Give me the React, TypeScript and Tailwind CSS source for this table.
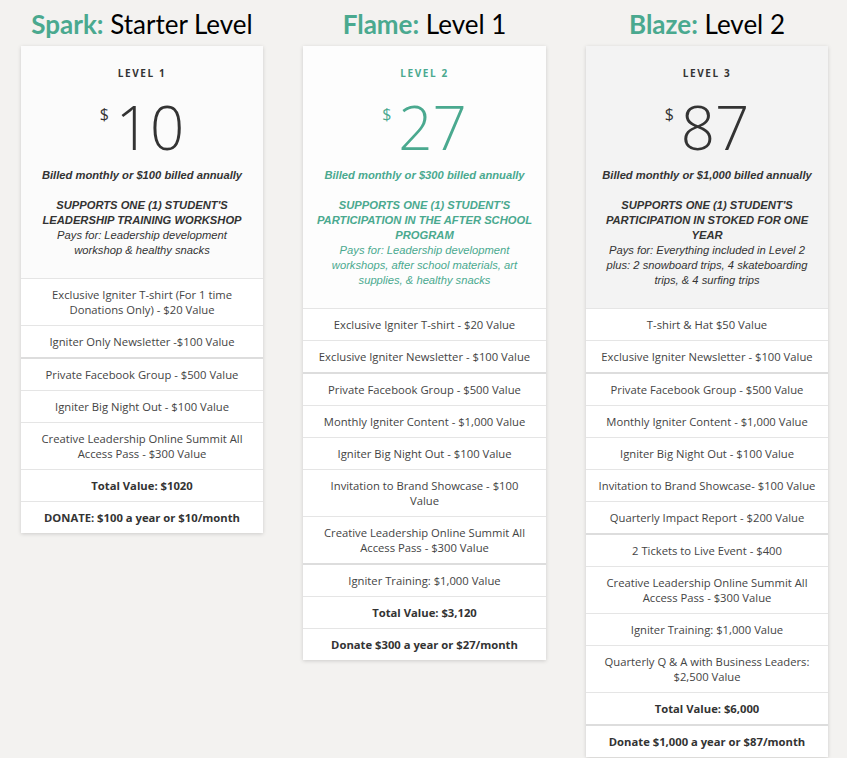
type Row = { text: string; bold?: boolean; thick?: boolean };

type Plan = {
  name: string;
  title: string;
  level: string;
  price: string;
  billed: string;
  supports: string;
  pays: string;
  teal: boolean;
  headerBg: string;
  rows: Row[];
};

const plans: Plan[] = [
  {
    name: 'Spark:',
    title: 'Starter Level',
    level: 'LEVEL 1',
    price: '10',
    billed: 'Billed monthly or $100 billed annually',
    supports: "SUPPORTS ONE (1) STUDENT'S LEADERSHIP TRAINING WORKSHOP",
    pays: 'Pays for: Leadership development workshop & healthy snacks',
    teal: false,
    headerBg: 'bg-[#fbfbfb]',
    rows: [
      { text: 'Exclusive Igniter T-shirt (For 1 time Donations Only) - $20 Value' },
      { text: 'Igniter Only Newsletter -$100 Value' },
      { text: 'Private Facebook Group - $500 Value', thick: true },
      { text: 'Igniter Big Night Out - $100 Value' },
      { text: 'Creative Leadership Online Summit All Access Pass - $300 Value' },
      { text: 'Total Value: $1020', bold: true },
      { text: 'DONATE: $100 a year or $10/month', bold: true },
    ],
  },
  {
    name: 'Flame:',
    title: 'Level 1',
    level: 'LEVEL 2',
    price: '27',
    billed: 'Billed monthly or $300 billed annually',
    supports: "SUPPORTS ONE (1) STUDENT'S PARTICIPATION IN THE AFTER SCHOOL PROGRAM",
    pays: 'Pays for: Leadership development workshops, after school materials, art supplies, & healthy snacks',
    teal: true,
    headerBg: 'bg-[#fdfdfd]',
    rows: [
      { text: 'Exclusive Igniter T-shirt - $20 Value' },
      { text: 'Exclusive Igniter Newsletter - $100 Value' },
      { text: 'Private Facebook Group - $500 Value', thick: true },
      { text: 'Monthly Igniter Content - $1,000 Value' },
      { text: 'Igniter Big Night Out - $100 Value' },
      { text: 'Invitation to Brand Showcase - $100\nValue' },
      { text: 'Creative Leadership Online Summit All Access Pass - $300 Value' },
      { text: 'Igniter Training: $1,000 Value', thick: true },
      { text: 'Total Value: $3,120', bold: true },
      { text: 'Donate $300 a year or $27/month', bold: true },
    ],
  },
  {
    name: 'Blaze:',
    title: 'Level 2',
    level: 'LEVEL 3',
    price: '87',
    billed: 'Billed monthly or $1,000 billed annually',
    supports: "SUPPORTS ONE (1) STUDENT'S PARTICIPATION IN STOKED FOR ONE YEAR",
    pays: 'Pays for: Everything included in Level 2 plus: 2 snowboard trips, 4 skateboarding trips, & 4 surfing trips',
    teal: false,
    headerBg: 'bg-[#f3f3f3]',
    rows: [
      { text: 'T-shirt & Hat $50 Value' },
      { text: 'Exclusive Igniter Newsletter - $100 Value' },
      { text: 'Private Facebook Group - $500 Value', thick: true },
      { text: 'Monthly Igniter Content - $1,000 Value' },
      { text: 'Igniter Big Night Out - $100 Value' },
      { text: 'Invitation to Brand Showcase- $100 Value' },
      { text: 'Quarterly Impact Report - $200 Value' },
      { text: '2 Tickets to Live Event - $400', thick: true },
      { text: 'Creative Leadership Online Summit All Access Pass - $300 Value' },
      { text: 'Igniter Training: $1,000 Value' },
      { text: 'Quarterly Q & A with Business Leaders: $2,500 Value' },
      { text: 'Total Value: $6,000', bold: true },
      { text: 'Donate $1,000 a year or $87/month', bold: true, thick: true },
    ],
  },
];

function PlanColumn({ plan }: { plan: Plan }) {
  const accent = plan.teal ? 'text-[#4aa98f]' : 'text-[#333333]';

  return (
    <div className="flex flex-col">
      <h2 className="text-center font-['Lato',sans-serif] text-[26px] leading-[32px] text-black mt-[1px] mb-[6px]">
        <span className="font-bold text-[#4aa98f]">{plan.name}</span> {plan.title}
      </h2>
      <div className="bg-white shadow-[0_1px_4px_rgba(0,0,0,0.16)]">
        <div className={`${plan.headerBg} px-3 pt-5 pb-5 text-center ${accent}`}>
          <div className="font-['Open_Sans',sans-serif] text-[10px] leading-[14px] font-bold tracking-[0.16em]">
            {plan.level}
          </div>
          <div className="flex justify-center items-start mt-[16px] font-['Open_Sans',sans-serif]">
            <span className="text-[16px] leading-[16px] mt-[10px] mr-[7px]">$</span>
            <span className="text-[60px] leading-[62px] font-light">{plan.price}</span>
          </div>
          <div className="mt-[10px] font-['Liberation_Sans',Arial,sans-serif] text-[11.2px] leading-[15px] italic">
            <p className="font-bold">{plan.billed}</p>
            <p className="mt-[15px] font-bold">{plan.supports}</p>
            <p>{plan.pays}</p>
          </div>
        </div>
        <ul className="font-['Open_Sans',sans-serif] text-[11.25px] leading-[15px] text-[#444444]">
          {plan.rows.map((row) => (
            <li
              key={row.text}
              className={`px-3 py-2 text-center whitespace-pre-line ${row.thick ? 'border-t-2 border-[#dddddd]' : 'border-t border-[#e5e5e5]'} ${row.bold ? 'font-bold text-[#333333]' : ''}`}
            >
              {row.text}
            </li>
          ))}
        </ul>
      </div>
    </div>
  );
}

export default function App() {
  return (
    <div className="min-h-[758px] bg-[#f3f2f0] pl-[21px] pt-[7px]">
      <div className="grid grid-cols-[242px_243px_242px] gap-10 items-start">
        {plans.map((plan) => (
          <PlanColumn key={plan.level} plan={plan} />
        ))}
      </div>
    </div>
  );
}
